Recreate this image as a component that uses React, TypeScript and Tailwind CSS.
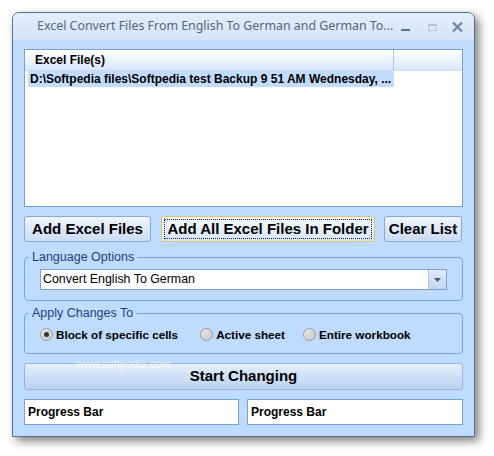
import React from "react";

const F = { fontFamily: '"Liberation Sans", Arial, sans-serif' };

function Radio({ checked, label }: { checked?: boolean; label: string }) {
  return (
    <div className="flex items-center gap-[3px]">
      <span className="w-[13px] h-[13px] rounded-full border border-[#9a9a9a] bg-gradient-to-br from-[#e8e8e8] to-[#c8c8c8] flex items-center justify-center">
        {checked && <span className="w-[5px] h-[5px] rounded-full bg-[#333]" />}
      </span>
      <span className="text-[11.7px] font-bold text-black leading-none">{label}</span>
    </div>
  );
}

export default function App() {
  return (
    <div className="w-[494px] h-[456px] bg-white relative overflow-hidden" style={F}>
      <div className="absolute left-[12px] top-[12px] w-[463px] h-[425px] rounded-t-[7px] border border-[#56708f] bg-[#bfdbff] shadow-[4px_4px_10px_rgba(0,0,0,0.5)] flex flex-col">
        {/* Title bar */}
        <div className="h-[28px] shrink-0 rounded-t-[6px] bg-gradient-to-b from-[#e4eefb] to-[#d4e4f8] border-b border-[#c7daf3] flex items-center relative">
          <span className="ml-[24px] text-[#56657a] leading-none" style={{ fontFamily: '"Noto Sans", "Liberation Sans", sans-serif', fontSize: "12.4px" }}>
            Excel Convert Files From English To German and German To...
          </span>
          <div className="absolute right-[10px] top-[8px] flex items-center">
            <svg width="12" height="12" viewBox="0 0 12 12" className="mr-[15px]">
              <rect x="1" y="8" width="9" height="2" fill="#5e7290" />
            </svg>
            <svg width="12" height="12" viewBox="0 0 12 12" className="mr-[12px]">
              <rect x="1.5" y="3.5" width="8" height="6" fill="none" stroke="#b8c6d8" />
              <rect x="1.5" y="3.5" width="8" height="1.5" fill="#b8c6d8" />
            </svg>
            <svg width="13" height="12" viewBox="0 0 13 12">
              <path d="M2 1.5 L11 10.5 M11 1.5 L2 10.5" stroke="#7489a6" strokeWidth="2.4" />
            </svg>
          </div>
        </div>

        {/* Body */}
        <div className="flex-1 flex flex-col px-[11px] pt-[8px] relative">
          {/* List */}
          <div className="h-[158px] border border-[#7aa1d6] bg-white flex flex-col">
            <div className="h-[21px] bg-gradient-to-b from-white to-[#d9e7fa] flex items-center border-b border-[#cddcf0]">
              <div className="w-[369px] h-full flex items-center pl-[10px] border-r border-[#a9c4e8]">
                <span className="text-[12px] font-bold text-black">Excel File(s)</span>
              </div>
            </div>
            <div className="ml-[3px] w-[366px] h-[16px] bg-[#c2dcfd] flex items-center pl-[2px]">
              <span className="text-[12px] font-bold text-black whitespace-nowrap">D:\Softpedia files\Softpedia test Backup 9 51 AM Wednesday, ...</span>
            </div>
          </div>

          {/* Buttons */}
          <div className="flex mt-[9px] h-[26px]">
            <div className="w-[127px] h-full rounded-[3px] border border-[#8ea9cc] bg-gradient-to-b from-[#f0f5fc] to-[#cadcf3] flex items-center justify-center">
              <span className="text-[15px] font-bold text-black">Add Excel Files</span>
            </div>
            <div className="ml-[10px] w-[214px] h-full rounded-[3px] border border-[#e3c56c] bg-gradient-to-b from-[#f5f8fd] to-[#d8e6f7] flex items-center justify-center p-[2px]">
              <div className="w-full h-full border border-dotted border-[#222] flex items-center justify-center">
                <span className="text-[15px] font-bold text-black">Add All Excel Files In Folder</span>
              </div>
            </div>
            <div className="ml-[9px] w-[78px] h-full rounded-[3px] border border-[#8ea9cc] bg-gradient-to-b from-[#f0f5fc] to-[#cadcf3] flex items-center justify-center">
              <span className="text-[15px] font-bold text-black">Clear List</span>
            </div>
          </div>

          {/* Language Options */}
          <fieldset className="mt-[8px] h-[51px] border border-[#7ba2d6] rounded-[4px] px-[15px]">
            <legend className="ml-[-11px] px-[3px] text-[12.5px] text-[#1d3f78] leading-[15px]">Language Options</legend>
            <div className="mt-[4px] h-[21px] border border-[#7ba2d6] bg-white flex items-center">
              <span className="flex-1 pl-[2px] text-[12.4px] text-black">Convert English To German</span>
              <div className="w-[18px] h-full bg-gradient-to-b from-[#dfeaf9] to-[#c3d7f1] border-l border-[#a9c2e4] flex items-center justify-center">
                <svg width="7" height="4" viewBox="0 0 7 4">
                  <path d="M0 0 H7 L3.5 4 Z" fill="#4a5d7a" />
                </svg>
              </div>
            </div>
          </fieldset>

          {/* Apply Changes To */}
          <fieldset className="mt-[5px] h-[48px] border border-[#7ba2d6] rounded-[4px] px-[15px]">
            <legend className="ml-[-11px] px-[3px] text-[12.5px] text-[#1d3f78] leading-[15px]">Apply Changes To</legend>
            <div className="mt-[7px] flex items-center">
              <Radio checked label="Block of specific cells" />
              <div className="ml-[22px]"><Radio label="Active sheet" /></div>
              <div className="ml-[18px]"><Radio label="Entire workbook" /></div>
            </div>
          </fieldset>

          <span className="absolute left-[63px] top-[315px] text-[11px] text-white/70 pointer-events-none">www.softpedia.com</span>

          {/* Start */}
          <div className="mt-[9px] h-[27px] rounded-[3px] border border-[#9ab3d3] bg-gradient-to-b from-[#e6effb] via-[#cfe0f6] to-[#bcd3f1] flex items-center justify-center">
            <span className="text-[15px] font-bold text-black">Start Changing</span>
          </div>

          {/* Progress */}
          <div className="mt-[9px] flex gap-[8px] h-[26px]">
            <div className="w-[215px] h-full border border-[#7ba2d6] bg-white flex items-center pl-[3px]">
              <span className="text-[12px] font-bold text-black">Progress Bar</span>
            </div>
            <div className="flex-1 h-full border border-[#7ba2d6] bg-white flex items-center pl-[3px]">
              <span className="text-[12px] font-bold text-black">Progress Bar</span>
            </div>
          </div>
        </div>
      </div>
    </div>
  );
}
